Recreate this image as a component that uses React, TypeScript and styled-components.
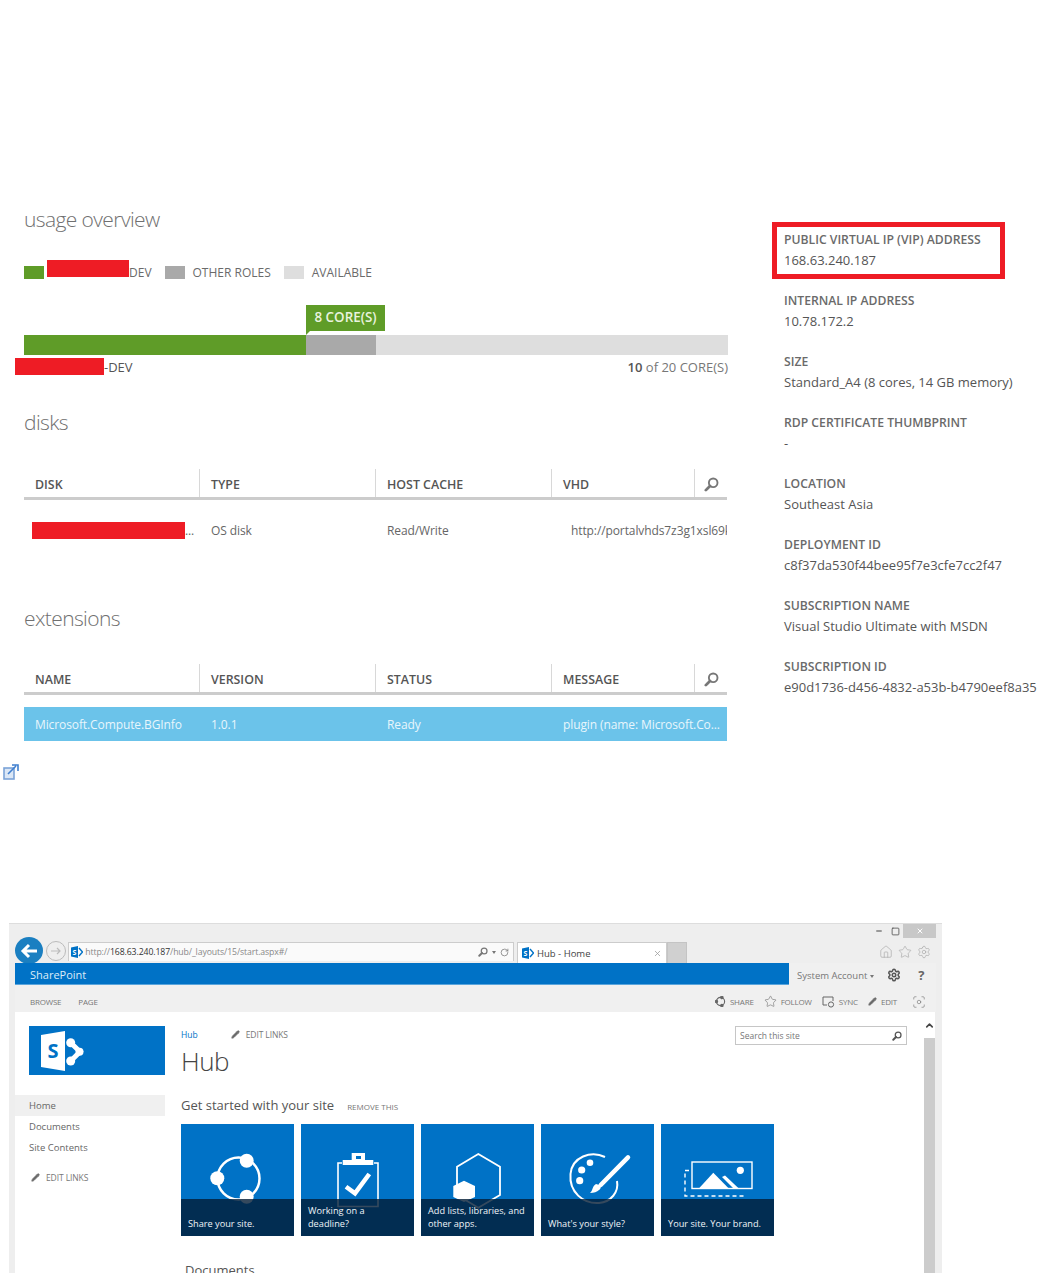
import { ChevronUp, Focus, House, Minus, Pencil, RotateCw, Settings, Square, Star, X } from 'lucide-react';
import type { ReactNode } from 'react';
import styled, { createGlobalStyle } from 'styled-components';

const GlobalStyle = createGlobalStyle`
    html, body {
        margin: 0;
        background: #fff;
    }
    body {
        font-family: "Open Sans", "Noto Sans", sans-serif;
        color: #666;
    }
`;

const Page = styled.div`
    width: 1054px;
    height: 1273px;
    overflow: hidden;
`;

const Portal = styled.div`
    display: flex;
    padding-top: 204px;
`;

const LeftColumn = styled.div`
    width: 704px;
    margin-left: 24px;
`;

const SectionTitle = styled.h2<{ $top?: number }>`
    margin: ${(p) => p.$top ?? 0}px 0 0;
    height: 30px;
    font-size: 21px;
    line-height: 30px;
    font-weight: 300;
    letter-spacing: -0.6px;
    color: #707070;
`;

const Legend = styled.div`
    display: flex;
    align-items: center;
    height: 24px;
    margin-top: 26px;
    font-size: 12px;
    color: #6a6a6a;
`;

const Swatch = styled.span<{ $color: string; $left?: number }>`
    width: 20px;
    height: 13px;
    margin-left: ${(p) => p.$left ?? 0}px;
    margin-right: 8px;
    background: ${(p) => p.$color};
`;

const Redaction = styled.span<{ $width: number; $left?: number }>`
    display: inline-block;
    flex: none;
    width: ${(p) => p.$width}px;
    height: 17px;
    margin-left: ${(p) => p.$left ?? 0}px;
    background: #ee1c25;
`;

const LegendRedaction = styled(Redaction)`
    margin-top: -7px;
`;

const Tip = styled.div`
    position: relative;
    width: 79px;
    height: 26px;
    margin: 21px 0 0 282px;
    background: #5f9c28;
    color: #e9f3df;
    font-size: 13.4px;
    font-weight: 600;
    line-height: 25px;
    text-align: center;

    &::after {
        content: '';
        position: absolute;
        left: 0;
        top: 100%;
        border-top: 4px solid #5f9c28;
        border-right: 4px solid transparent;
    }
`;

const Bar = styled.div`
    display: flex;
    height: 20px;
    margin-top: 4px;
    background: #dedede;
`;

const BarPart = styled.div<{ $width: number; $color: string }>`
    width: ${(p) => p.$width}px;
    background: ${(p) => p.$color};
`;

const BarCaption = styled.div`
    display: flex;
    align-items: center;
    justify-content: space-between;
    height: 23px;
    font-size: 13px;
    color: #777;
`;

const RoleName = styled.span`
    display: flex;
    align-items: center;
    margin-left: -9px;
    color: #555;
`;

const Strong = styled.strong`
    font-weight: 600;
    color: #555;
`;

const TableHead = styled.div<{ $top: number }>`
    display: grid;
    grid-template-columns: 176px 176px 176px 143px 32px;
    width: 703px;
    height: 28px;
    margin-top: ${(p) => p.$top}px;
    border-bottom: 3px solid #ccc;
`;

const HeadCell = styled.div`
    display: flex;
    align-items: center;
    padding: 3px 0 0 11px;
    border-right: 1px solid #d8d8d8;
    font-size: 12.4px;
    font-weight: 600;
    color: #555;

    &:last-child {
        border-right: 0;
        padding-left: 9px;
    }
`;

const TableRow = styled.div<{ $selected?: boolean; $height: number; $top?: number }>`
    display: grid;
    grid-template-columns: 176px 176px 176px 175px;
    align-items: center;
    width: 703px;
    height: ${(p) => p.$height}px;
    margin-top: ${(p) => p.$top ?? 0}px;
    background: ${(p) => (p.$selected ? '#6bc3ea' : 'transparent')};
    color: ${(p) => (p.$selected ? '#e8f6fc' : '#666')};
    font-size: 12px;
    letter-spacing: -0.1px;
`;

const Cell = styled.div<{ $inset?: number }>`
    display: flex;
    align-items: center;
    padding-left: ${(p) => p.$inset ?? 11}px;
    white-space: nowrap;
    overflow: hidden;
`;

const PopOut = styled.svg`
    display: block;
    margin: 23px 0 0 -21px;
`;

const Properties = styled.dl`
    display: flex;
    flex-direction: column;
    gap: 19px;
    width: 270px;
    margin: 25px 0 0 56px;
`;

const Property = styled.div`
    position: relative;
    white-space: nowrap;
`;

const PropertyLabel = styled.dt`
    height: 21px;
    font-size: 12.2px;
    line-height: 21px;
    font-weight: 600;
    color: #6a6a6a;
`;

const PropertyValue = styled.dd`
    height: 21px;
    margin: 0;
    font-size: 13px;
    line-height: 21px;
    color: #555;
`;

const Callout = styled.div`
    position: absolute;
    left: -12px;
    top: -7px;
    width: 233px;
    height: 57px;
    box-sizing: border-box;
    border: 5px solid #ee1c25;
`;

const Browser = styled.div`
    width: 921px;
    height: 350px;
    margin: 143px 0 0 9px;
    padding: 0 6px;
    overflow: hidden;
    background: #eee;
    border-top: 1px solid #ddd;
    box-sizing: content-box;
`;

const Chrome = styled.div`
    display: flex;
    align-items: flex-end;
    height: 39px;
`;

const BackButton = styled.div`
    display: flex;
    align-items: center;
    justify-content: center;
    flex: none;
    width: 28px;
    height: 27px;
    margin-bottom: -1px;
    border-radius: 50%;
    background: #1a7fc1;
`;

const ForwardButton = styled.div`
    display: flex;
    align-items: center;
    justify-content: center;
    flex: none;
    width: 18px;
    height: 18px;
    margin: 0 2px 2px 3px;
    border: 1px solid #bbb;
    border-radius: 50%;
`;

const Address = styled.div`
    display: flex;
    align-items: center;
    flex: none;
    width: 446px;
    height: 19px;
    margin-bottom: 2px;
    padding-left: 2px;
    border: 1px solid #ccc;
    border-bottom-width: 0;
    background: #fafafa;
    font-size: 8.7px;
    letter-spacing: -0.1px;
    color: #888;
    box-sizing: border-box;
`;

const Host = styled.span`
    color: #333;
`;

const AddressTools = styled.span`
    display: flex;
    align-items: center;
    gap: 4px;
    margin-left: auto;
    margin-right: 4px;
    color: #777;
`;

const Caret = styled.span`
    width: 0;
    height: 0;
    border-top: 3px solid #777;
    border-left: 2.5px solid transparent;
    border-right: 2.5px solid transparent;
`;

const BrowserTab = styled.div`
    display: flex;
    align-items: center;
    gap: 3px;
    flex: none;
    width: 150px;
    height: 21px;
    margin-left: 3px;
    padding: 0 4px;
    border: 1px solid #ccc;
    border-bottom: 0;
    background: #fff;
    font-size: 9.5px;
    color: #444;
    box-sizing: border-box;
`;

const TabClose = styled(X)`
    margin-left: auto;
    color: #999;
`;

const NewTab = styled.div`
    flex: none;
    width: 20px;
    height: 21px;
    background: #d0d0d0;
    border: 1px solid #c4c4c4;
    border-bottom: 0;
    box-sizing: border-box;
`;

const WindowArea = styled.div`
    display: flex;
    flex-direction: column;
    align-items: flex-end;
    align-self: stretch;
    margin-left: auto;
`;

const WindowButtons = styled.div`
    display: flex;
    align-items: center;
    height: 14px;
    color: #444;
`;

const WindowButton = styled.span<{ $close?: boolean }>`
    display: flex;
    align-items: center;
    justify-content: center;
    width: ${(p) => (p.$close ? 33 : 16)}px;
    height: 14px;
    background: ${(p) => (p.$close ? '#c8c8c8' : 'transparent')};
    color: ${(p) => (p.$close ? '#fff' : '#444')};
`;

const BrowserTools = styled.div`
    display: flex;
    gap: 5px;
    margin: 7px 5px 0 0;
    color: #aaa;
`;

const SuiteBar = styled.div`
    display: flex;
    align-items: center;
    height: 22px;
    background: #f0f0f0;
`;

const SuiteBrand = styled.div`
    display: flex;
    align-items: center;
    width: 774px;
    height: 22px;
    padding: 1px 0 0 15px;
    border-bottom: 1px solid #5aa5dc;
    background: #0072c6;
    color: #dcecf8;
    font-size: 11px;
    box-sizing: border-box;
`;

const Account = styled.span`
    margin: 2px 0 0 8px;
    font-size: 9.5px;
    color: #777;
`;

const AccountCaret = styled(Caret)`
    display: inline-block;
    margin-left: 3px;
    vertical-align: 1px;
`;

const SuiteGear = styled(Settings)`
    margin: 2px 0 0 13px;
    color: #555;
`;

const Help = styled.span`
    margin: 1px 0 0 17px;
    font-size: 13px;
    font-weight: 700;
    color: #666;
`;

const Ribbon = styled.div`
    display: flex;
    align-items: center;
    height: 27px;
    padding: 6px 10px 0 15px;
    background: #f0f0f0;
    font-size: 8px;
    letter-spacing: -0.2px;
    color: #777;
    box-sizing: border-box;
`;

const RibbonTab = styled.span`
    margin-right: 17px;
`;

const RibbonActions = styled.div`
    display: flex;
    align-items: center;
    gap: 10px;
    margin-left: auto;
`;

const RibbonAction = styled.span`
    display: flex;
    align-items: center;
    gap: 4px;
`;

const FocusButton = styled(Focus)`
    margin-left: 5px;
`;

const Site = styled.div`
    display: flex;
    height: 261px;
`;

const SiteBody = styled.div`
    display: flex;
    width: 909px;
    background: #fff;
`;

const SideNav = styled.nav`
    flex: none;
    width: 150px;
    padding-top: 14px;
    font-size: 9.5px;
    color: #666;
`;

const Logo = styled.div`
    display: flex;
    align-items: center;
    width: 136px;
    height: 49px;
    margin: 0 0 20px 14px;
    padding-left: 12px;
    background: #0072c6;
    box-sizing: border-box;
`;

const NavItem = styled.div<{ $current?: boolean }>`
    display: flex;
    align-items: center;
    height: 21px;
    padding-left: 14px;
    background: ${(p) => (p.$current ? '#f0f0f0' : 'transparent')};
`;

const EditLinks = styled.div`
    display: flex;
    align-items: center;
    gap: 6px;
    font-size: 8.5px;
    letter-spacing: -0.1px;
    color: #777;
`;

const NavEdit = styled(EditLinks)`
    height: 21px;
    margin: 9px 0 0 16px;
`;

const Main = styled.main`
    width: 726px;
    margin-left: 16px;
    padding-top: 14px;
`;

const Masthead = styled.div`
    display: flex;
    align-items: flex-start;
`;

const Crumbs = styled.div`
    display: flex;
    align-items: center;
    height: 17px;
    font-size: 8.5px;
`;

const CrumbLink = styled.a`
    margin-right: 33px;
    color: #0072c6;
`;

const SiteTitle = styled.h1`
    margin: 0;
    height: 38px;
    font-size: 26px;
    line-height: 36px;
    font-weight: 300;
    letter-spacing: -0.5px;
    color: #444;
`;

const SearchBox = styled.div`
    display: flex;
    align-items: center;
    justify-content: space-between;
    width: 172px;
    height: 19px;
    margin-left: auto;
    padding: 0 4px;
    border: 1px solid #c6c6c6;
    font-size: 8.5px;
    color: #777;
    box-sizing: border-box;
`;

const GetStarted = styled.div`
    display: flex;
    align-items: baseline;
    gap: 13px;
    height: 20px;
    margin-top: 14px;
    font-size: 13px;
    line-height: 20px;
    color: #555;
`;

const Remove = styled.span`
    font-size: 8px;
    color: #777;
`;

const Tiles = styled.div`
    display: grid;
    grid-template-columns: repeat(5, 113px);
    gap: 7px;
    margin-top: 9px;
`;

const Tile = styled.div`
    position: relative;
    height: 112px;
    background: #0072c6;
`;

const TileCaption = styled.div`
    position: absolute;
    left: 0;
    right: 0;
    bottom: 0;
    height: 37px;
    padding: 5px 0 0 7px;
    background: rgba(2, 27, 52, 0.8);
    color: #f0f4f8;
    font-size: 9.2px;
    line-height: 13px;
    box-sizing: border-box;
`;

const CaptionLine = styled.span<{ $single?: boolean }>`
    display: block;
    margin-top: ${(p) => (p.$single ? 13 : 0)}px;
`;

const Documents = styled.div`
    height: 20px;
    margin: 24px 0 0 4px;
    font-size: 13px;
    line-height: 20px;
    color: #555;
`;

const Scrollbar = styled.div`
    display: flex;
    flex-direction: column;
    align-items: center;
    flex: none;
    width: 11px;
    color: #444;
`;

const ScrollArrow = styled.div`
    display: flex;
    justify-content: center;
    height: 26px;
    width: 100%;
    padding-top: 8px;
    background: #fff;
    box-sizing: border-box;
`;

const ScrollThumb = styled.div`
    flex: 1;
    width: 100%;
    background: #ccc;
`;

const SearchGlyph = ({ size, color }: { size: number; color: string }) => (
    <svg width={size} height={size} viewBox="0 0 16 16" fill="none" stroke={color}>
        <circle cx="9.8" cy="6.2" r="4.6" strokeWidth="2" />
        <path d="M6.4 9.6 L2 14" strokeWidth="3" strokeLinecap="round" />
    </svg>
);

const SharePointMark = () => (
    <svg width="43" height="40" viewBox="0 0 43 40">
        <path d="M0 4 L24 0 V40 L0 36 Z" fill="#fff" />
        <text x="12" y="26.5" textAnchor="middle" fontFamily="Open Sans, sans-serif" fontSize="20" fontWeight="700" fill="#0072c6">S</text>
        <path d="M29.7 11.7 L39 20.7 L29.7 30" fill="none" stroke="#fff" strokeWidth="5" />
        <circle cx="29.7" cy="11.7" r="4.5" fill="#fff" />
        <circle cx="38.5" cy="20.7" r="4" fill="#fff" />
        <circle cx="29.7" cy="30" r="4.5" fill="#fff" />
    </svg>
);

const TabMark = () => (
    <svg width="12" height="12" viewBox="0 0 12 12">
        <path d="M0 1.5 L7 0 V12 L0 10.5 Z" fill="#0072c6" />
        <text x="1.5" y="8.6" fontFamily="Open Sans, sans-serif" fontSize="7" fontWeight="700" fill="#fff">S</text>
        <path d="M8 2 L11.5 6 L8 10" fill="none" stroke="#0072c6" strokeWidth="1.4" />
    </svg>
);

const TileSvg = ({ children }: { children: ReactNode }) => (
    <svg width="113" height="112" viewBox="0 0 113 112">{children}</svg>
);

const ShareIcon = () => (
    <TileSvg>
        <circle cx="57.5" cy="54.5" r="21" fill="none" stroke="#fff" strokeWidth="2.5" />
        <circle cx="65.7" cy="36.7" r="7" fill="#fff" />
        <circle cx="36.3" cy="54.3" r="7" fill="#fff" />
        <circle cx="65.7" cy="72.7" r="7" fill="#fff" />
    </TileSvg>
);

const DeadlineIcon = () => (
    <TileSvg>
        <path d="M41 39 H37 V82.5 H77 V39 H73" fill="none" stroke="#fff" strokeWidth="1.6" />
        <path d="M41.7 41 V36 H50.7 V29 H64 V36 H72.3 V41 Z M55 32 V35 H60 V32 Z" fill="#fff" fillRule="evenodd" />
        <path d="M45 62.7 L54 69.3 L68.3 50" fill="none" stroke="#fff" strokeWidth="4.5" />
    </TileSvg>
);

const AppsIcon = () => (
    <TileSvg>
        <path d="M57.3 30 L79 42.7 V71 L57.3 83.7 L36 71 V42.7 Z" fill="none" stroke="#fff" strokeWidth="1.8" />
        <path d="M43 56.7 L54 62 V73 L43 78 L32.3 73 V62 Z" fill="#fff" />
    </TileSvg>
);

const StyleIcon = () => (
    <TileSvg>
        <path d="M64 33 C50 26 31 33 29.5 50 C28 68 42 80 58 79 C70 78 78 68 76 57" fill="none" stroke="#fff" strokeWidth="2" />
        <circle cx="40.7" cy="46" r="3.6" fill="#fff" />
        <circle cx="49" cy="38.7" r="3.3" fill="#fff" />
        <circle cx="38.7" cy="56.7" r="3.6" fill="#fff" />
        <path d="M87 33.3 L59.7 61" stroke="#fff" strokeWidth="4.5" strokeLinecap="round" />
        <path d="M55 60 C60 61 61 64 58 66 C56 68 53 69 49 69 C52 67 51 62 55 60 Z" fill="#fff" />
    </TileSvg>
);

const BrandIcon = () => (
    <TileSvg>
        <rect x="31" y="38" width="60" height="26.5" fill="none" stroke="#fff" strokeWidth="1.4" />
        <circle cx="79.3" cy="46.3" r="3.6" fill="#fff" />
        <path d="M38.3 64 L52.3 48.7 L67.3 64 Z" fill="#fff" />
        <path d="M61 53 L64 51.5 L77.3 64 H72 Z" fill="#fff" />
        <path d="M28 46.5 H24 V72 H82.5 V69.5" fill="none" stroke="#fff" strokeWidth="1.4" strokeDasharray="4 3" />
    </TileSvg>
);

const SyncIcon = () => (
    <svg width="13" height="12" viewBox="0 0 13 12" fill="none" stroke="#666" strokeWidth="1">
        <path d="M5 9 H1 V1 H11 V5" />
        <circle cx="9" cy="8.5" r="2.6" fill="#f0f0f0" />
    </svg>
);

const ShareRing = () => (
    <svg width="11" height="11" viewBox="0 0 12 12" fill="none" stroke="#666" strokeWidth="1.2">
        <circle cx="6" cy="6" r="4.5" />
        <circle cx="7.5" cy="1.6" r="1.3" fill="#666" />
        <circle cx="1.6" cy="6" r="1.3" fill="#666" />
        <circle cx="7.5" cy="10.4" r="1.3" fill="#666" />
    </svg>
);

const property = [
    ['INTERNAL IP ADDRESS', '10.78.172.2'],
    ['SIZE', 'Standard_A4 (8 cores, 14 GB memory)'],
    ['RDP CERTIFICATE THUMBPRINT', '-'],
    ['LOCATION', 'Southeast Asia'],
    ['DEPLOYMENT ID', 'c8f37da530f44bee95f7e3cfe7cc2f47'],
    ['SUBSCRIPTION NAME', 'Visual Studio Ultimate with MSDN'],
    ['SUBSCRIPTION ID', 'e90d1736-d456-4832-a53b-b4790eef8a35'],
];

export default function App() {
    return (
        <Page>
            <GlobalStyle />
            <Portal>
                <LeftColumn>
                    <SectionTitle>usage overview</SectionTitle>
                    <Legend>
                        <Swatch $color="#5f9c28" $left={0} />
                        <LegendRedaction $width={82} $left={-5} />
                        DEV
                        <Swatch $color="#a9a9a9" $left={13} />
                        OTHER ROLES
                        <Swatch $color="#dedede" $left={13} />
                        AVAILABLE
                    </Legend>
                    <Tip>8 CORE(S)</Tip>
                    <Bar>
                        <BarPart $width={282} $color="#5f9c28" />
                        <BarPart $width={70} $color="#a9a9a9" />
                    </Bar>
                    <BarCaption>
                        <RoleName><Redaction $width={89} />-DEV</RoleName>
                        <span><Strong>10</Strong> of 20 CORE(S)</span>
                    </BarCaption>

                    <SectionTitle $top={29}>disks</SectionTitle>
                    <TableHead $top={32}>
                        <HeadCell>DISK</HeadCell>
                        <HeadCell>TYPE</HeadCell>
                        <HeadCell>HOST CACHE</HeadCell>
                        <HeadCell>VHD</HeadCell>
                        <HeadCell><SearchGlyph size={15} color="#777" /></HeadCell>
                    </TableHead>
                    <TableRow $height={60}>
                        <Cell $inset={8}><Redaction $width={153} />...</Cell>
                        <Cell>OS disk</Cell>
                        <Cell>Read/Write</Cell>
                        <Cell $inset={19}>http://portalvhds7z3g1xsl69k</Cell>
                    </TableRow>

                    <SectionTitle $top={43}>extensions</SectionTitle>
                    <TableHead $top={31}>
                        <HeadCell>NAME</HeadCell>
                        <HeadCell>VERSION</HeadCell>
                        <HeadCell>STATUS</HeadCell>
                        <HeadCell>MESSAGE</HeadCell>
                        <HeadCell><SearchGlyph size={15} color="#777" /></HeadCell>
                    </TableHead>
                    <TableRow $selected $height={34} $top={12}>
                        <Cell>Microsoft.Compute.BGInfo</Cell>
                        <Cell>1.0.1</Cell>
                        <Cell>Ready</Cell>
                        <Cell>plugin (name: Microsoft.Co...</Cell>
                    </TableRow>
                    <PopOut width="16" height="16" viewBox="0 0 16 16">
                        <rect x="1" y="4" width="10" height="11" fill="#dbe7f6" stroke="#7ba3d8" strokeWidth="1.6" />
                        <path d="M5 10 L13 2 M9 1 H15 V7" fill="none" stroke="#3f7fcf" strokeWidth="1.6" />
                    </PopOut>
                </LeftColumn>
                <Properties>
                    <Property>
                        <PropertyLabel>PUBLIC VIRTUAL IP (VIP) ADDRESS</PropertyLabel>
                        <PropertyValue>168.63.240.187</PropertyValue>
                        <Callout />
                    </Property>
                    {property.map(([label, value]) => (
                        <Property key={label}>
                            <PropertyLabel>{label}</PropertyLabel>
                            <PropertyValue>{value}</PropertyValue>
                        </Property>
                    ))}
                </Properties>
            </Portal>

            <Browser>
                <Chrome>
                    <BackButton>
                        <svg width="18" height="16" viewBox="0 0 18 16" fill="none" stroke="#fff" strokeWidth="3">
                            <path d="M17 8 H3 M9 2 L3 8 L9 14" />
                        </svg>
                    </BackButton>
                    <ForwardButton>
                        <svg width="11" height="10" viewBox="0 0 11 10" fill="none" stroke="#bbb" strokeWidth="1.2">
                            <path d="M0 5 H9 M6 2 L9 5 L6 8" />
                        </svg>
                    </ForwardButton>
                    <Address>
                        <TabMark />
                        &nbsp;http://<Host>168.63.240.187</Host>/hub/_layouts/15/start.aspx#/
                        <AddressTools>
                            <SearchGlyph size={10} color="#777" />
                            <Caret />
                            <RotateCw size={9} />
                        </AddressTools>
                    </Address>
                    <BrowserTab>
                        <TabMark />
                        Hub - Home
                        <TabClose size={9} />
                    </BrowserTab>
                    <NewTab />
                    <WindowArea>
                        <WindowButtons>
                            <WindowButton><Minus size={8} strokeWidth={3} /></WindowButton>
                            <WindowButton><Square size={9} strokeWidth={2} /></WindowButton>
                            <WindowButton $close><X size={8} strokeWidth={3} /></WindowButton>
                        </WindowButtons>
                        <BrowserTools>
                            <House size={14} strokeWidth={1.2} />
                            <Star size={14} strokeWidth={1.2} />
                            <Settings size={14} strokeWidth={1.2} />
                        </BrowserTools>
                    </WindowArea>
                </Chrome>
                <SuiteBar>
                    <SuiteBrand>SharePoint</SuiteBrand>
                    <Account>System Account<AccountCaret /></Account>
                    <SuiteGear size={14} strokeWidth={2.6} />
                    <Help>?</Help>
                </SuiteBar>
                <Ribbon>
                    <RibbonTab>BROWSE</RibbonTab>
                    <RibbonTab>PAGE</RibbonTab>
                    <RibbonActions>
                        <RibbonAction><ShareRing />SHARE</RibbonAction>
                        <RibbonAction><Star size={13} strokeWidth={1.2} />FOLLOW</RibbonAction>
                        <RibbonAction><SyncIcon />SYNC</RibbonAction>
                        <RibbonAction><Pencil size={9} fill="#666" />EDIT</RibbonAction>
                        <FocusButton size={14} strokeWidth={1.1} />
                    </RibbonActions>
                </Ribbon>
                <Site>
                    <SiteBody>
                        <SideNav>
                            <Logo><SharePointMark /></Logo>
                            <NavItem $current>Home</NavItem>
                            <NavItem>Documents</NavItem>
                            <NavItem>Site Contents</NavItem>
                            <NavEdit><Pencil size={9} fill="#666" />EDIT LINKS</NavEdit>
                        </SideNav>
                        <Main>
                            <Masthead>
                                <div>
                                    <Crumbs>
                                        <CrumbLink>Hub</CrumbLink>
                                        <EditLinks><Pencil size={9} fill="#666" />EDIT LINKS</EditLinks>
                                    </Crumbs>
                                    <SiteTitle>Hub</SiteTitle>
                                </div>
                                <SearchBox>
                                    Search this site
                                    <SearchGlyph size={10} color="#555" />
                                </SearchBox>
                            </Masthead>
                            <GetStarted>Get started with your site<Remove>REMOVE THIS</Remove></GetStarted>
                            <Tiles>
                                <Tile>
                                    <ShareIcon />
                                    <TileCaption><CaptionLine $single>Share your site.</CaptionLine></TileCaption>
                                </Tile>
                                <Tile>
                                    <DeadlineIcon />
                                    <TileCaption><CaptionLine>Working on a</CaptionLine><CaptionLine>deadline?</CaptionLine></TileCaption>
                                </Tile>
                                <Tile>
                                    <AppsIcon />
                                    <TileCaption><CaptionLine>Add lists, libraries, and</CaptionLine><CaptionLine>other apps.</CaptionLine></TileCaption>
                                </Tile>
                                <Tile>
                                    <StyleIcon />
                                    <TileCaption><CaptionLine $single>What's your style?</CaptionLine></TileCaption>
                                </Tile>
                                <Tile>
                                    <BrandIcon />
                                    <TileCaption><CaptionLine $single>Your site. Your brand.</CaptionLine></TileCaption>
                                </Tile>
                            </Tiles>
                            <Documents>Documents</Documents>
                        </Main>
                    </SiteBody>
                    <Scrollbar>
                        <ScrollArrow><ChevronUp size={11} strokeWidth={3.5} /></ScrollArrow>
                        <ScrollThumb />
                    </Scrollbar>
                </Site>
            </Browser>
        </Page>
    );
}
